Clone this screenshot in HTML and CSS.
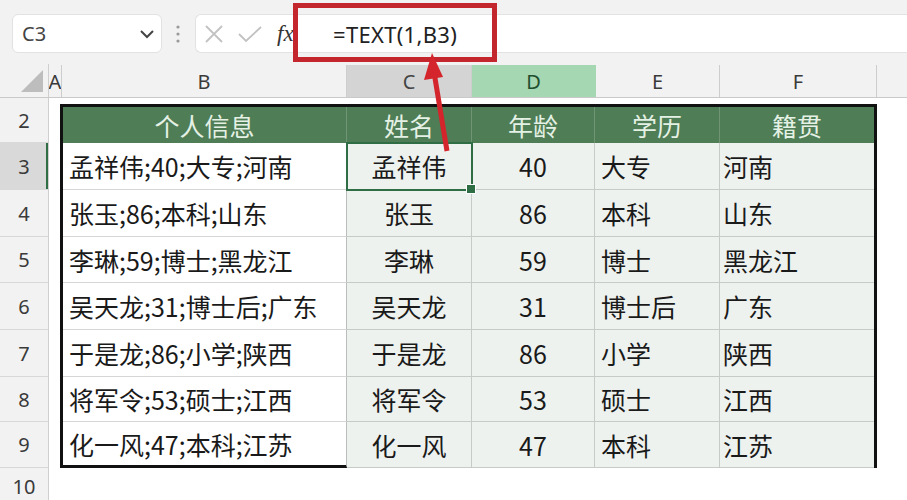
FILE: index.html
```html
<!DOCTYPE html>
<html lang="zh-CN">
<head>
<meta charset="utf-8">
<title>TEXT</title>
<link rel="stylesheet" href="styles.css">
</head>
<body>
<div class="app">
  <div class="toolbar">
    <div class="namebox">
      <span class="nametext">C3</span>
      <svg class="chev" width="16" height="10" viewBox="0 0 16 10"><path d="M2 2 L8 8 L14 2" fill="none" stroke="#444" stroke-width="2"/></svg>
    </div>
    <svg class="dots" width="6" height="20" viewBox="0 0 6 20"><circle cx="3" cy="3" r="1.6" fill="#9a9a9a"/><circle cx="3" cy="10" r="1.6" fill="#9a9a9a"/><circle cx="3" cy="17" r="1.6" fill="#9a9a9a"/></svg>
    <div class="fbar">
      <div class="fbtns">
        <svg class="icx" width="22" height="18" viewBox="0 0 22 18"><path d="M3 1 L19 17 M19 1 L3 17" stroke="#c2c2c2" stroke-width="1.8" fill="none"/></svg>
        <svg class="icv" width="26" height="18" viewBox="0 0 26 18"><path d="M2 9 L9 16 L24 2" stroke="#c2c2c2" stroke-width="1.8" fill="none"/></svg>
        <span class="fx">fx</span>
      </div>
      <div class="finput">=TEXT(1,B3)</div>
    </div>
  </div>

  <div class="colhdr">
    <div class="corner"><svg width="24" height="24" viewBox="0 0 24 24"><polygon points="1,23 23,1 23,23" fill="#bdbdbd"/></svg></div>
    <div class="ch cha">A</div>
    <div class="ch chb">B</div>
    <div class="ch chc">C</div>
    <div class="ch chd">D</div>
    <div class="ch che">E</div>
    <div class="ch chf">F</div>
    <div class="ch rest"></div>
  </div>

  <div class="body">
    <div class="rowhdrs">
      <div class="rh r2">2</div>
      <div class="rh r47 rsel">3</div>
      <div class="rh r47">4</div>
      <div class="rh r46">5</div>
      <div class="rh r47">6</div>
      <div class="rh r47">7</div>
      <div class="rh r45">8</div>
      <div class="rh r46">9</div>
      <div class="rh rlast">10</div>
    </div>
    <div class="cola"></div>
    <div class="framearea">
      <div class="frame">
        <div class="hd">个人信息</div>
        <div class="hd">姓名</div>
        <div class="hd">年龄</div>
        <div class="hd">学历</div>
        <div class="hd hdl">籍贯</div>

        <div class="c cb">孟祥伟;40;大专;河南</div>
        <div class="c cc sel">孟祥伟</div>
        <div class="c cd">40</div>
        <div class="c ce">大专</div>
        <div class="c cf">河南</div>

        <div class="c cb">张玉;86;本科;山东</div>
        <div class="c cc">张玉</div>
        <div class="c cd">86</div>
        <div class="c ce">本科</div>
        <div class="c cf">山东</div>

        <div class="c cb">李琳;59;博士;黑龙江</div>
        <div class="c cc">李琳</div>
        <div class="c cd">59</div>
        <div class="c ce">博士</div>
        <div class="c cf">黑龙江</div>

        <div class="c cb">吴天龙;31;博士后;广东</div>
        <div class="c cc">吴天龙</div>
        <div class="c cd">31</div>
        <div class="c ce">博士后</div>
        <div class="c cf">广东</div>

        <div class="c cb">于是龙;86;小学;陕西</div>
        <div class="c cc">于是龙</div>
        <div class="c cd">86</div>
        <div class="c ce">小学</div>
        <div class="c cf">陕西</div>

        <div class="c cb">将军令;53;硕士;江西</div>
        <div class="c cc">将军令</div>
        <div class="c cd">53</div>
        <div class="c ce">硕士</div>
        <div class="c cf">江西</div>

        <div class="c cb lastb">化一风;47;本科;江苏</div>
        <div class="c cc">化一风</div>
        <div class="c cd">47</div>
        <div class="c ce">本科</div>
        <div class="c cf">江苏</div>
      </div>
    </div>
    <div class="restcol"></div>
  </div>

  <div class="callout"></div>
  <svg class="arrow" width="907" height="500" viewBox="0 0 907 500">
    <line x1="447" y1="151" x2="434" y2="72" stroke="#d3252b" stroke-width="5"/>
    <polygon points="432,53 424,80 443,77" fill="#d3252b"/>
  </svg>
</div>
</body>
</html>
```

FILE: styles.css
```css
* { box-sizing: border-box; }
html, body { margin: 0; padding: 0; }
body {
  width: 907px;
  height: 500px;
  overflow: hidden;
  background: #ffffff;
  font-family: "Noto Sans", "Noto Sans CJK SC", sans-serif;
}
.app {
  position: relative;
  width: 907px;
  height: 500px;
  overflow: hidden;
}

/* toolbar */
.toolbar {
  height: 64px;
  background: #f2f2f2;
  display: flex;
  align-items: flex-start;
  padding-top: 14px;
}
.namebox {
  margin-left: 12px;
  width: 150px;
  height: 39px;
  background: #fff;
  border: 1px solid #e2e2e2;
  border-radius: 6px;
  display: flex;
  align-items: center;
  padding-left: 9px;
  padding-right: 6px;
}
.nametext {
  flex: 1;
  font-size: 20px;
  color: #444;
}
.chev { display: block; }
.dots {
  display: block;
  margin-left: 13px;
  margin-top: 10px;
}
.fbar {
  margin-left: 14px;
  flex: 1;
  height: 39px;
  background: #fff;
  border: 1px solid #e2e2e2;
  border-right: none;
  border-radius: 6px 0 0 6px;
  display: flex;
  align-items: center;
}
.fbtns {
  width: 104px;
  display: flex;
  align-items: center;
  padding-left: 7px;
}
.icx { display: block; }
.icv { display: block; margin-left: 12px; }
.fx {
  margin-left: 14px;
  font-family: "Liberation Serif", serif;
  font-style: italic;
  font-size: 23px;
  color: #333;
}
.finput {
  padding-left: 33px;
  font-size: 22px;
  letter-spacing: 0.3px;
  color: #222;
}

/* column headers */
.colhdr {
  height: 34px;
  display: flex;
  background: #f2f2f2;
  border-bottom: 1px solid #c9c9c9;
}
.corner {
  width: 49px;
  border-right: 1px solid #cfcfcf;
  display: flex;
  align-items: flex-end;
  justify-content: flex-end;
  padding-right: 4px;
  padding-bottom: 4px;
}
.corner svg { display: block; }
.ch {
  display: flex;
  align-items: center;
  justify-content: center;
  font-size: 20px;
  color: #3a3a3a;
  border-right: 1px solid #cdcdcd;
  margin-top: 1px;
}
.cha { width: 13px; overflow: hidden; }
.chb { width: 285px; }
.chc { width: 125px; background: #d4d4d4; color: #444; }
.chd { width: 124px; background: #a5d7b3; color: #1f4f2e; border-right-color: #a5d7b3; }
.che { width: 124px; }
.chf { width: 157px; }
.rest { flex: 1; border-right: none; }

/* body */
.body {
  display: flex;
  height: 402px;
}
.rowhdrs {
  width: 49px;
  background: #f2f2f2;
  border-right: 1px solid #cfcfcf;
  display: flex;
  flex-direction: column;
}
.rh {
  display: flex;
  align-items: center;
  justify-content: center;
  font-size: 20px;
  color: #3a3a3a;
  border-bottom: 1px solid #d8d8d8;
}
.r2 { height: 45px; }
.r45 { height: 45px; }
.r46 { height: 46px; }
.r47 { height: 47px; }
.rlast { flex: 1; border-bottom: none; padding-top: 4px; }
.rsel {
  background: #d9d9d9;
  box-shadow: inset -2px 0 0 #2f6d45;
}
.cola { width: 11px; }
.framearea {
  width: 817px;
  padding-top: 6px;
}
.frame {
  border: 3px solid #111;
  border-bottom: none;
  display: grid;
  grid-template-columns: 284px 125px 123px 125px 154px;
  grid-template-rows: 36px 47px 47px 46px 47px 47px 45px 46px;
  font-family: "Noto Sans CJK SC", sans-serif;
  font-size: 25px;
}
.hd {
  background: #4f7d56;
  color: #e4f1e4;
  display: flex;
  align-items: center;
  justify-content: center;
  border-right: 1px solid #6f9575;
}
.hdl { border-right: none; }
.c {
  display: flex;
  align-items: center;
  color: #1a1a1a;
  background: #eef2ef;
  border-right: 1px solid #c6cbc7;
  border-bottom: 1px solid #c6cbc7;
}
.cb {
  background: #fff;
  padding-left: 6px;
  border-bottom-color: #d6d6d6;
  border-right-color: #bcbcbc;
}
.cc, .cd { justify-content: center; }
.ce { padding-left: 6px; }
.cf { padding-left: 3px; border-right: none; }
.lastb { border-bottom: 3px solid #111; }
.sel {
  position: relative;
  outline: 2px solid #2f6d45;
  outline-offset: -1px;
}
.sel::after {
  content: "";
  position: absolute;
  right: -5px;
  bottom: -5px;
  width: 8px;
  height: 8px;
  background: #2f6d45;
  border: 1px solid #fff;
}
.restcol { flex: 1; }

/* annotation overlays */
.callout {
  position: absolute;
  left: 293px;
  top: 3px;
  width: 204px;
  height: 59px;
  border: 5px solid #c4262e;
}
.arrow {
  position: absolute;
  left: 0;
  top: 0;
  pointer-events: none;
}
```
